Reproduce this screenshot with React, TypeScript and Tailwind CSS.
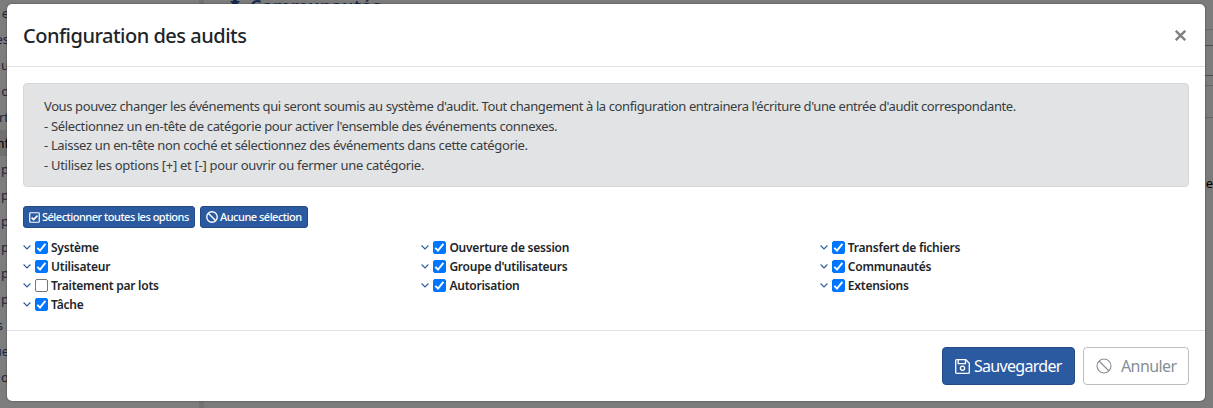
import { useState } from 'react';

interface AuditCategory {
  id: string;
  label: string;
  enabled: boolean;
}

const columns: AuditCategory[][] = [
  [
    { id: 'system', label: 'Système', enabled: true },
    { id: 'user', label: 'Utilisateur', enabled: true },
    { id: 'batch', label: 'Traitement par lots', enabled: false },
    { id: 'task', label: 'Tâche', enabled: true }
  ],
  [
    { id: 'login', label: 'Ouverture de session', enabled: true },
    { id: 'group', label: "Groupe d'utilisateurs", enabled: true },
    { id: 'authorization', label: 'Autorisation', enabled: true }
  ],
  [
    { id: 'transfer', label: 'Transfert de fichiers', enabled: true },
    { id: 'communities', label: 'Communautés', enabled: true },
    { id: 'extensions', label: 'Extensions', enabled: true }
  ]
];

const sidebarItems = ['e', 'es', 'u', 'o', 'rt', 'nf', 'p', 'p', 'p', 'p', 'p', 'p', 's', 'ue', 'q'];

function CheckSquareIcon() {
  return (
    <svg viewBox="0 0 12 12" className="w-[11px] h-[11px] shrink-0" fill="none" stroke="currentColor" strokeWidth="1.3">
      <rect x="0.8" y="0.8" width="10.4" height="10.4" rx="0.8" />
      <path d="M2.8 6.1 5 8.3 9.3 4" strokeWidth="1.8" />
    </svg>
  );
}

function BanIcon({ className, strokeWidth }: { className: string; strokeWidth: number }) {
  return (
    <svg viewBox="0 0 16 16" className={className} fill="none" stroke="currentColor" strokeWidth={strokeWidth}>
      <circle cx="8" cy="8" r="7" />
      <path d="m3 3 10 10" />
    </svg>
  );
}

function SaveIcon() {
  return (
    <svg viewBox="0 0 15 15" className="w-[15px] h-[15px] shrink-0" fill="none" stroke="currentColor" strokeWidth="1.3">
      <path d="M1.6.7h9.2l3.5 3.5v9.2a.9.9 0 0 1-.9.9H1.6a.9.9 0 0 1-.9-.9V1.6a.9.9 0 0 1 .9-.9Z" />
      <path d="M3.2.7v4h7.3v-4" />
      <circle cx="7.5" cy="9.3" r="2.1" />
    </svg>
  );
}

function Checkbox({ checked }: { checked: boolean }) {
  return (
    <span
      className={`flex w-[13px] h-[13px] rounded-[2px] border ${
        checked ? 'bg-[#0075ff] border-[#0075ff]' : 'bg-white border-[#767676]'
      }`}
    >
      {checked && (
        <svg viewBox="0 0 11 11" className="w-[11px] h-[11px]" fill="none" stroke="white" strokeWidth="1.9">
          <path d="m1.3 5.8 2.7 2.7 5.4-6.6" />
        </svg>
      )}
    </span>
  );
}

function CategoryRow({ category, onToggle }: { category: AuditCategory; onToggle: () => void }) {
  return (
    <button
      role="checkbox"
      aria-checked={category.enabled}
      onClick={onToggle}
      className="flex items-center h-[19px] text-left"
    >
      <svg viewBox="0 0 8 5" className="w-2 h-[5px] mr-1 text-[#2c5aa0]" fill="none" stroke="currentColor" strokeWidth="1.1">
        <path d="m.6.5 3.4 3.4L7.4.5" />
      </svg>
      <Checkbox checked={category.enabled} />
      <span className="ml-[3px] text-[12px] font-semibold tracking-[-0.23px] whitespace-nowrap">{category.label}</span>
    </button>
  );
}

function PageBehind() {
  return (
    <div className="flex h-full text-[13px] text-[#1d2540]">
      <div className="w-[199px] bg-[#7d7d7d] overflow-hidden">
        {sidebarItems.map((item, i) => (
          <div key={i} className={`h-[26px] leading-[26px] ${item === 'nf' ? 'bg-[#707070] text-black' : ''}`}>
            <div className={`flex justify-end ${item === 's' ? 'w-[3px]' : 'w-[9px]'}`}>{item}</div>
          </div>
        ))}
      </div>
      <div className="w-[5px] bg-[#727272]" />
      <div className="flex-1 bg-[#7c7c7c] flex justify-between overflow-hidden">
        <div className="flex pl-6 text-[18px] font-semibold text-[#172c50] leading-[12px]">
          <svg viewBox="0 0 14 14" className="w-[14px] h-[14px] -mt-[7px] mr-2" fill="currentColor">
            <path d="M5 0h4v8h3l-5 6-5-6h3Z" />
          </svg>
          <span className="tracking-[0.2px]">Communautés</span>
        </div>
        <div className="w-[9px]">
          <div className="mt-[29px] h-4 border-t border-[#6b6b6b]" />
          <div className="h-[31px] border-y border-[#4d4d4d]" />
          <div className="mt-[9px] h-[33px] border-y border-[#666666]" />
          <div className="mt-[56px] flex justify-end text-black">ge</div>
        </div>
      </div>
    </div>
  );
}

export default function App() {
  const [data, setData] = useState(columns);

  const setAll = (enabled: boolean) => {
    setData(data.map((column) => column.map((c) => ({ ...c, enabled }))));
  };

  const toggle = (id: string) => {
    setData(data.map((column) => column.map((c) => (c.id === id ? { ...c, enabled: !c.enabled } : c))));
  };

  return (
    <div className="relative w-full h-[408px] overflow-hidden font-['Noto_Sans','Open_Sans',sans-serif] text-[#212529]">
      <PageBehind />

      <div className="absolute left-[7px] right-2 top-1 h-[397px] flex flex-col bg-white rounded-[5px] shadow-[0_0_2px_rgba(0,0,0,0.5)]">
        <div className="h-[63px] shrink-0 flex items-center justify-between px-4 border-b border-[#dee2e6]">
          <h5 className="mt-0.5 text-[20px] font-medium tracking-[-0.5px]">Configuration des audits</h5>
          <button className="w-[18px] h-[18px] mt-px flex items-center justify-center text-[#7f7f7f]" aria-label="Fermer">
            <svg viewBox="0 0 10 10" className="w-[11px] h-[11px]" stroke="currentColor" strokeWidth="2.1">
              <path d="m.7.7 8.6 8.6M9.3.7.7 9.3" />
            </svg>
          </button>
        </div>

        <div className="flex-1 px-4 pt-4">
          <div className="h-[104px] px-5 py-[13px] rounded-[4px] border border-[#d6d8db] bg-[#e2e3e5] text-[13px] leading-[19.5px] text-[#383d41] whitespace-nowrap">
            <p className="tracking-[-0.395px]">
              Vous pouvez changer les événements qui seront soumis au système d'audit. Tout changement à la configuration entrainera l'écriture d'une entrée d'audit correspondante.
            </p>
            <p className="tracking-[-0.345px]">- Sélectionnez un en-tête de catégorie pour activer l'ensemble des événements connexes.</p>
            <p className="tracking-[-0.345px]">- Laissez un en-tête non coché et sélectionnez des événements dans cette catégorie.</p>
            <p className="tracking-[-0.29px]">- Utilisez les options [+] et [-] pour ouvrir ou fermer une catégorie.</p>
          </div>

          <div className="flex gap-[5px] mt-[19px] text-[11px] font-medium text-white whitespace-nowrap">
            <button
              onClick={() => setAll(true)}
              className="w-[172px] h-[22px] flex items-center gap-[2px] pl-[5px] rounded-[3px] border border-[#244a86] bg-[#2c5aa0]"
            >
              <CheckSquareIcon />
              <span className="tracking-[-0.5px]">Sélectionner toutes les options</span>
            </button>
            <button
              onClick={() => setAll(false)}
              className="w-[108px] h-[22px] flex items-center gap-[2px] pl-[5px] rounded-[3px] border border-[#244a86] bg-[#2c5aa0]"
            >
              <BanIcon className="w-3 h-3" strokeWidth={1.8} />
              <span className="tracking-[-0.5px]">Aucune sélection</span>
            </button>
          </div>

          <div className="flex mt-[10px]">
            {data.map((column, i) => (
              <div key={i} className={`flex flex-col items-start ${i < 2 ? 'w-[398.4px] shrink-0' : 'flex-1'}`}>
                {column.map((category) => (
                  <CategoryRow key={category.id} category={category} onToggle={() => toggle(category.id)} />
                ))}
              </div>
            ))}
          </div>
        </div>

        <div className="h-[71px] shrink-0 flex items-center justify-end gap-2 px-4 border-t border-[#dee2e6] text-[16px] whitespace-nowrap">
          <button className="w-[133px] h-[38px] flex items-center gap-1 pl-3 rounded-[4px] border border-[#244a86] bg-[#2c5aa0] text-white">
            <SaveIcon />
            <span className="tracking-[-0.7px]">Sauvegarder</span>
          </button>
          <button className="w-[106px] h-[38px] flex items-center gap-[9px] pl-3 rounded-[4px] border border-[#bcbec0] bg-white text-[#868e96]">
            <BanIcon className="w-4 h-4" strokeWidth={1.1} />
            <span className="tracking-[-0.6px]">Annuler</span>
          </button>
        </div>
      </div>
    </div>
  );
}
